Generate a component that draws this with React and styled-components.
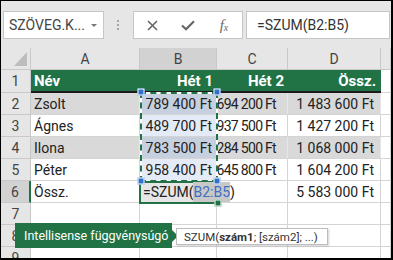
import React from 'react'
import styled, { createGlobalStyle } from 'styled-components'

const GREEN = '#217346'
const BLUE = '#2f6fce'

const GlobalStyle = createGlobalStyle`
  html, body { margin: 0; padding: 0; background: #fff; }
  body { font-family: Roboto, "Liberation Sans", sans-serif; }
`

const Frame = styled.div`
  position: relative;
  width: 393px;
  height: 260px;
  box-sizing: border-box;
  border-style: solid;
  border-color: #000;
  border-width: 1px 2px 2px 1px;
  background: #e6e6e6;
  overflow: hidden;
  color: #222;
`

const Toolbar = styled.div`
  display: flex;
  align-items: center;
  height: 47px;
  box-sizing: border-box;
  padding: 10px 1px 9px 2px;
`

const NameBox = styled.div`
  display: flex;
  align-items: center;
  justify-content: space-between;
  width: 101px;
  height: 28px;
  box-sizing: border-box;
  padding: 0 6px 0 5px;
  background: #fff;
  border: 1px solid #c6c6c6;
  font-size: 14px;
  color: #444;
`

const Caret = styled.span`
  width: 0;
  height: 0;
  border-left: 3px solid transparent;
  border-right: 3px solid transparent;
  border-top: 3px solid #777;
`

const Grip = styled.div`
  display: flex;
  flex-direction: column;
  gap: 2px;
  margin: 0 14px 0 13px;
  & > span {
    width: 2px;
    height: 2px;
    background: #a6a6a6;
  }
`

const ButtonBox = styled.div`
  display: grid;
  grid-template-columns: repeat(3, 36px);
  align-items: center;
  justify-items: center;
  width: 110px;
  height: 28px;
  box-sizing: border-box;
  background: #fff;
  border: 1px solid #c6c6c6;
  color: #666;
`

const FxGlyph = styled.span`
  font-family: "Liberation Serif", serif;
  font-style: italic;
  font-size: 15px;
  color: #666;
  & sub {
    font-size: 10px;
    vertical-align: -1px;
  }
`

const FormulaBox = styled.div`
  flex: 1;
  display: flex;
  align-items: center;
  height: 28px;
  margin-left: 3px;
  box-sizing: border-box;
  padding-left: 10px;
  background: #fff;
  border: 1px solid #c6c6c6;
  font-size: 14px;
  color: #333;
`

const Sheet = styled.div`
  position: relative;
  display: grid;
  grid-template-columns: 30px 109px 77px 71px 93px 1fr;
  grid-template-rows: 22px 23px repeat(8, 22px);
`

const HeadCell = styled.div`
  display: flex;
  align-items: center;
  justify-content: center;
  box-sizing: border-box;
  background: ${p => (p.$active ? '#d2d2d2' : '#e6e6e6')};
  border-right: ${p => (p.$activeRow ? `2px solid ${GREEN}` : '1px solid #c8c8c8')};
  border-bottom: 1px solid #c8c8c8;
  font-size: 14px;
  color: #444;
`

const Corner = styled(HeadCell)`
  align-items: flex-end;
  justify-content: flex-end;
  padding: 0 3px 3px 0;
  & > span {
    width: 13px;
    height: 14px;
    background: #bdbdbd;
    clip-path: polygon(100% 0, 100% 100%, 0 100%);
  }
`

const TitleCell = styled.div`
  display: flex;
  align-items: center;
  justify-content: ${p => (p.$right ? 'flex-end' : 'flex-start')};
  box-sizing: border-box;
  padding: 0 ${p => p.$pr ?? 4}px 0 3px;
  background: ${GREEN};
  border-bottom: 2px solid #1b1b1b;
  color: #fff;
  font-weight: 700;
  font-size: 15px;
  white-space: nowrap;
`

const tintFor = p => {
  if (p.$over) return 'transparent'
  if (p.$tint) return p.$band ? '#c6d0de' : '#e4ebf6'
  return p.$band ? '#d9d9d9' : '#fff'
}

const Cell = styled.div`
  position: relative;
  z-index: ${p => (p.$over ? 3 : 'auto')};
  display: flex;
  align-items: center;
  justify-content: ${p => (p.$right ? 'flex-end' : 'flex-start')};
  box-sizing: border-box;
  padding: 0 ${p => p.$pr ?? 4}px 0 3px;
  background: ${tintFor};
  border-right: 1px solid ${p => (p.$over ? 'transparent' : p.$band ? '#e6e6e6' : '#d4d4d4')};
  border-bottom: 1px solid ${p => (p.$over ? 'transparent' : '#d4d4d4')};
  font-size: 14px;
  letter-spacing: ${p => (p.$tight ? '-0.7px' : '0')};
  white-space: nowrap;
  overflow: visible;
  color: #222;
`

const RefText = styled.span`
  color: #3f6fc4;
  background: #c8c8c8;
  line-height: 20px;
`

const TextCaret = styled.span`
  display: inline-block;
  width: 1px;
  height: 17px;
  margin-left: -5px;
  background: #000;
  vertical-align: middle;
`

const RangeBox = styled.div`
  position: absolute;
  z-index: 2;
  left: 139px;
  top: 44px;
  width: 78px;
  height: 90px;
  box-sizing: border-box;
  border: 2px solid #fff;
  &::before {
    content: '';
    position: absolute;
    inset: -2px;
    border: 2px dashed ${GREEN};
  }
`

const ActiveBox = styled.div`
  position: absolute;
  z-index: 2;
  left: 138px;
  top: 133px;
  width: 80px;
  height: 23px;
  box-sizing: border-box;
  border: 2px solid ${GREEN};
`

const Handle = styled.span`
  position: absolute;
  z-index: 4;
  width: 5px;
  height: 5px;
  background: ${p => p.$color};
  border: 1px solid #fff;
  transform: translate(-50%, -50%);
`

const Tip = styled.div`
  position: absolute;
  z-index: 5;
  left: 14px;
  top: 222px;
  width: 157px;
  height: 25px;
  box-sizing: border-box;
  display: flex;
  align-items: center;
  padding-left: 9px;
  background: ${GREEN};
  color: #fff;
  font-size: 12.5px;
  white-space: nowrap;
  &::after {
    content: '';
    position: absolute;
    right: -6px;
    top: 7px;
    border-top: 6px solid transparent;
    border-bottom: 6px solid transparent;
    border-left: 6px solid ${GREEN};
  }
`

const FuncTip = styled.div`
  position: absolute;
  z-index: 5;
  left: 175px;
  top: 227px;
  width: 152px;
  height: 17px;
  box-sizing: border-box;
  display: flex;
  align-items: center;
  padding: 0 0 0 7px;
  background: #fff;
  border: 1px solid #bdbdbd;
  box-shadow: 1px 1px 2px rgba(0, 0, 0, 0.18);
  font-size: 11.5px;
  color: #333;
  white-space: pre;
  & b {
    font-weight: 700;
  }
`

const rows = [
  { n: 2, name: 'Zsolt', b: '789 400 Ft', c: '694 200 Ft', d: '1 483 600 Ft', band: true },
  { n: 3, name: 'Ágnes', b: '489 700 Ft', c: '937 500 Ft', d: '1 427 200 Ft' },
  { n: 4, name: 'Ilona', b: '783 500 Ft', c: '284 500 Ft', d: '1 068 000 Ft', band: true },
  { n: 5, name: 'Péter', b: '958 400 Ft', c: '645 800 Ft', d: '1 604 200 Ft' },
]

const CrossIcon = () => (
  <svg width="11" height="11" viewBox="0 0 11 11">
    <path d="M1 1 L10 10 M10 1 L1 10" stroke="#666" strokeWidth="1.6" fill="none" />
  </svg>
)

const CheckIcon = () => (
  <svg width="14" height="11" viewBox="0 0 14 11">
    <path d="M1 5.5 L5 9.2 L13 1.2" stroke="#666" strokeWidth="2.2" fill="none" />
  </svg>
)

export default function App() {
  return (
    <>
      <GlobalStyle />
      <Frame>
        <Toolbar>
          <NameBox>
            <span>SZÖVEG.K...</span>
            <Caret />
          </NameBox>
          <Grip>
            <span />
            <span />
            <span />
          </Grip>
          <ButtonBox>
            <CrossIcon />
            <CheckIcon />
            <FxGlyph>
              f<sub>x</sub>
            </FxGlyph>
          </ButtonBox>
          <FormulaBox>=SZUM(B2:B5)</FormulaBox>
        </Toolbar>

        <Sheet>
          <Corner>
            <span />
          </Corner>
          <HeadCell>A</HeadCell>
          <HeadCell $active>B</HeadCell>
          <HeadCell>C</HeadCell>
          <HeadCell>D</HeadCell>
          <HeadCell />

          <HeadCell>1</HeadCell>
          <TitleCell>Név</TitleCell>
          <TitleCell $right>Hét 1</TitleCell>
          <TitleCell $right>Hét 2</TitleCell>
          <TitleCell $right $pr={5}>Össz.</TitleCell>
          <Cell />

          {rows.map(r => (
            <React.Fragment key={r.n}>
              <HeadCell>{r.n}</HeadCell>
              <Cell $band={r.band}>{r.name}</Cell>
              <Cell $band={r.band} $tint $right>{r.b}</Cell>
              <Cell $band={r.band} $right $tight $pr={11}>{r.c}</Cell>
              <Cell $band={r.band} $right $pr={6}>{r.d}</Cell>
              <Cell />
            </React.Fragment>
          ))}

          <HeadCell $active $activeRow>6</HeadCell>
          <Cell>Össz.</Cell>
          <Cell $over>
            =SZUM(<RefText>B2:B5</RefText>)<TextCaret />
          </Cell>
          <Cell />
          <Cell $right $pr={6}>5 583 000 Ft</Cell>
          <Cell />

          {[7, 8, 9].map(n => (
            <React.Fragment key={n}>
              <HeadCell>{n}</HeadCell>
              <Cell />
              <Cell />
              <Cell />
              <Cell />
              <Cell />
            </React.Fragment>
          ))}

          <RangeBox />
          <ActiveBox />
          <Handle $color={BLUE} style={{ left: 140, top: 44 }} />
          <Handle $color={BLUE} style={{ left: 216, top: 44 }} />
          <Handle $color={BLUE} style={{ left: 140, top: 133 }} />
          <Handle $color={BLUE} style={{ left: 216, top: 133 }} />
          <Handle $color={GREEN} style={{ left: 217, top: 155 }} />
        </Sheet>

        <Tip>Intellisense függvénysúgó</Tip>
        <FuncTip>
          SZUM(<b>szám1</b>; [szám2]; ...)
        </FuncTip>
      </Frame>
    </>
  )
}
